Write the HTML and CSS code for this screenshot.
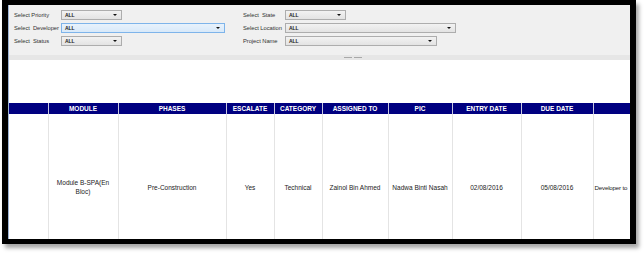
FILE: index.html
```html
<!DOCTYPE html>
<html>
<head>
<meta charset="utf-8">
<link rel="stylesheet" href="styles.css">
</head>
<body>
<div class="frame">
  <div class="content">
    <div class="panel">
      <div class="group">
        <div class="frow"><span class="lbl">Select Priority</span><div class="dd w61"><span>ALL</span><i class="arr"></i></div></div>
        <div class="frow"><span class="lbl">Select&nbsp; Developer</span><div class="dd w164 focus"><span>ALL</span><i class="arr"></i></div></div>
        <div class="frow"><span class="lbl">Select&nbsp; Status</span><div class="dd w61"><span>ALL</span><i class="arr"></i></div></div>
      </div>
      <div class="group g2">
        <div class="frow"><span class="lbl l2">Select&nbsp; State</span><div class="dd w61"><span>ALL</span><i class="arr"></i></div></div>
        <div class="frow"><span class="lbl l2">Select Location</span><div class="dd w171"><span>ALL</span><i class="arr"></i></div></div>
        <div class="frow"><span class="lbl l2">Project Name</span><div class="dd w152"><span>ALL</span><i class="arr"></i></div></div>
      </div>
    </div>
    <div class="splitter"><div class="handle"></div></div>
    <div class="gap"></div>
    <table class="grid">
      <colgroup>
        <col class="c0"><col class="c1"><col class="c2"><col class="c3"><col class="c4"><col class="c5"><col class="c6"><col class="c7"><col class="c8"><col class="c9">
      </colgroup>
      <thead>
        <tr><th></th><th>MODULE</th><th>PHASES</th><th>ESCALATE</th><th>CATEGORY</th><th>ASSIGNED TO</th><th>PIC</th><th>ENTRY DATE</th><th>DUE DATE</th><th></th></tr>
      </thead>
      <tbody>
        <tr><td></td><td>Module B-SPA(En<br>Bloc)</td><td>Pre-Construction</td><td>Yes</td><td>Technical</td><td>Zainol Bin Ahmed</td><td>Nadwa Binti Nasah</td><td>02/08/2016</td><td>05/08/2016</td><td class="left">Developer to</td></tr>
      </tbody>
    </table>
  </div>
</div>
</body>
</html>
```
FILE: styles.css
```css
html, body { margin: 0; padding: 0; background: #fff; }
body { width: 644px; height: 253px; overflow: hidden; font-family: "Liberation Sans", Arial, sans-serif; }
.frame {
  margin-left: 2px;
  width: 622px;
  height: 234px;
  border-style: solid;
  border-color: #000;
  border-width: 5px 6px 5px 6px;
  box-shadow: 3px 4px 4px rgba(0,0,0,0.35);
  overflow: hidden;
}
.content {
  width: 621px;
  height: 234px;
  border-left: 1px solid #9db3d4;
  overflow: hidden;
  background: #fff;
}
.panel {
  height: 45px;
  padding-top: 5px;
  background: #f0f0f0;
  display: flex;
}
.group { display: flex; flex-direction: column; gap: 3px; padding-left: 5px; width: 224px; }
.g2 { padding-left: 5px; }
.frow { display: flex; align-items: center; height: 10px; }
.lbl { width: 47px; font-size: 5.8px; color: #333; white-space: nowrap; letter-spacing: -0.05px; }
.l2 { width: 42px; }
.dd {
  box-sizing: border-box;
  height: 10px;
  border: 1px solid #adadad;
  background: linear-gradient(#f2f2f2, #e3e3e3);
  display: flex;
  align-items: center;
  justify-content: space-between;
  padding: 0 4px 0 3px;
}
.dd span { font-size: 5px; font-weight: bold; color: #222; letter-spacing: -0.1px; }
.dd.focus { background: linear-gradient(#e8f2fc, #d8e9f9); border-color: #7eb4ea; }
.arr { width: 0; height: 0; border-left: 2px solid transparent; border-right: 2px solid transparent; border-top: 2px solid #111; }
.w61 { width: 61px; }
.w164 { width: 164px; }
.w171 { width: 171px; }
.w152 { width: 152px; }
.splitter { height: 5px; background: #e6e6e6; display: flex; justify-content: center; align-items: center; padding-left: 66px; box-sizing: border-box; }
.handle { width: 18px; height: 1px; background: linear-gradient(90deg, #a8a8a8 0 8px, transparent 8px 10px, #a8a8a8 10px 18px); }
.gap { height: 43px; }
.grid { border-collapse: collapse; table-layout: fixed; width: 773px; }
.c0 { width: 39px; } .c1 { width: 70px; } .c2 { width: 108px; } .c3 { width: 48px; } .c4 { width: 48px; }
.c5 { width: 66px; } .c6 { width: 64px; } .c7 { width: 69px; } .c8 { width: 72px; } .c9 { width: 189px; }
.grid th {
  background: #000080;
  color: #fff;
  font-size: 6.5px;
  font-weight: bold;
  height: 11px;
  padding: 0;
  border-left: 1px solid #c8c8e0;
  text-align: center;
  white-space: nowrap;
}
.grid th:first-child { border-left: none; }
.grid td {
  height: 146px;
  padding: 0 2px;
  font-size: 6.5px;
  color: #222;
  text-align: center;
  vertical-align: middle;
  border-left: 1px solid #e4e4e4;
  white-space: nowrap;
  line-height: 9px;
}
.grid td:first-child { border-left: none; }
.grid td.left { text-align: left; padding-left: 1px; font-size: 6.2px; letter-spacing: -0.2px; }
```
